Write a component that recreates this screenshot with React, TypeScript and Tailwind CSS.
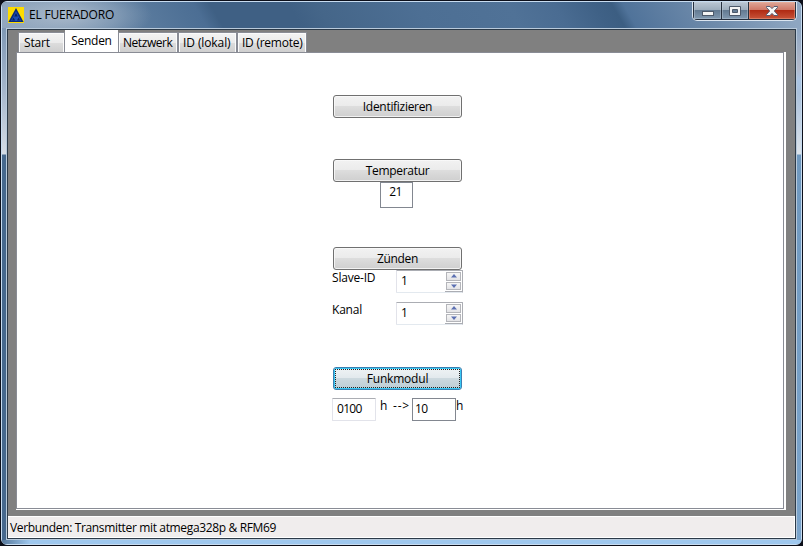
import type { ReactNode } from "react";

function AppIcon() {
  return (
    <svg width="16" height="16" viewBox="0 0 16 16" className="shrink-0">
      <rect width="16" height="16" fill="#fddc00" />
      <path d="M8 1 L15.6 15 H0.4 Z" fill="#0b2a78" />
      <path d="M8 4 L13 14 H3 Z" fill="#1c4fb4" />
      <path d="M8 6 L9.8 9.6 H6.2 Z M5.5 10.5 L7.2 13.5 H4 Z M10.5 10.5 L12.2 13.5 H9 Z" fill="#0a2260" />
    </svg>
  );
}

function CaptionButtons() {
  return (
    <div className="flex h-[19px] w-[105px] shrink-0 overflow-hidden rounded-b-[5px] border border-t-0 border-[#dbe5f0] bg-[#26303f] p-px pt-0">
      <div className="flex w-[27px] items-center justify-center bg-[linear-gradient(180deg,#bac6d3_0%,#9babbb_48%,#637a92_50%,#8199b0_100%)] shadow-[inset_0_0_0_1px_#c5d1de66]">
        <svg width="14" height="14" viewBox="0 0 14 14">
          <rect x="1.5" y="7.5" width="11" height="4" fill="#f4f4f4" stroke="#4d596a" />
        </svg>
      </div>
      <div className="ml-px flex w-[26px] items-center justify-center bg-[linear-gradient(180deg,#bac6d3_0%,#9babbb_48%,#637a92_50%,#8199b0_100%)] shadow-[inset_0_0_0_1px_#c5d1de66]">
        <svg width="14" height="14" viewBox="0 0 14 14">
          <path fillRule="evenodd" d="M1.5 2.5 H12.5 V11.5 H1.5 Z M4.5 5.5 V8.5 H9.5 V5.5 Z" fill="#f4f4f4" stroke="#4d596a" />
        </svg>
      </div>
      <div className="ml-px flex flex-1 items-center justify-center bg-[linear-gradient(180deg,#dfa799_0%,#cf7867_46%,#b02b14_50%,#c8543a_100%)] shadow-[inset_0_0_0_1px_#f0b8a066]">
        <svg width="14" height="14" viewBox="0 0 14 14">
          <path
            d="M1.5 2.5 H5 L7 4.6 L9 2.5 H12.5 V3.5 L9.3 7 L12.5 10.5 V11.5 H9 L7 9.4 L5 11.5 H1.5 V10.5 L4.7 7 L1.5 3.5 Z"
            fill="#f6f6f6"
            stroke="#565b70"
          />
        </svg>
      </div>
    </div>
  );
}

function Tab({ children, className }: { children: ReactNode; className: string }) {
  return (
    <div
      className={`h-[20px] whitespace-nowrap border border-b-0 border-[#898c95] bg-[linear-gradient(180deg,#f3f3f3_0%,#ebebeb_50%,#dddddd_52%,#cfcfcf_100%)] pt-px leading-[18px] shadow-[inset_1px_1px_0_#fbfbfb,inset_-1px_0_0_#fbfbfb] ${className}`}
    >
      {children}
    </div>
  );
}

function Button({ children, focused = false }: { children: ReactNode; focused?: boolean }) {
  if (focused) {
    return (
      <div className="ml-px h-[23px] w-[129px] rounded-[3px] border border-[#3c7fb1] bg-[linear-gradient(180deg,#eff3f5_0%,#e2e9ed_48%,#cdd9df_50%,#bccdd5_100%)] p-px tracking-[-0.2px] shadow-[inset_0_0_0_1px_#38c8f4]">
        <div className="h-[19px] border border-dotted border-[#222] text-center leading-[18px]">{children}</div>
      </div>
    );
  }
  return (
    <div className="ml-px h-[23px] w-[129px] rounded-[3px] border border-[#707070] bg-[linear-gradient(180deg,#f2f2f2_0%,#ebebeb_48%,#dddddd_50%,#cfcfcf_100%)] text-center leading-[22px] tracking-[-0.3px] shadow-[inset_0_0_0_1px_#fafafacc]">
      {children}
    </div>
  );
}

function Spinner({ value }: { value: string }) {
  return (
    <div className="flex h-[23px] w-[67px] rounded-[1px] border border-[#abadb3] border-b-[#e3e9ef] border-l-[#e2e3ea] bg-white">
      <div className="flex-1 pl-[4px] leading-[20px]">{value}</div>
      <div className="flex w-[17px] flex-col gap-px border-b border-[#abadb3] p-px">
        {["M4 0 L7 3.5 H1 Z", "M1 0.5 H7 L4 4 Z"].map((d) => (
          <div
            key={d}
            className="flex flex-1 items-center justify-center border border-[#b4b5ba] bg-[linear-gradient(180deg,#f6f6f6,#e3e3e6)]"
          >
            <svg width="8" height="4" viewBox="0 0 8 4">
              <path d={d} fill="#5c70b2" />
            </svg>
          </div>
        ))}
      </div>
    </div>
  );
}

export default function App() {
  return (
    <div className="h-[546px] w-[803px] overflow-hidden bg-[#0c0f1a] p-px font-['Open_Sans','Noto_Sans',sans-serif] text-[12px] text-black">
      <div className="flex h-full flex-col rounded-[6px] border border-[#c8dcf0] bg-[linear-gradient(90deg,#46688d_0px,#46688d_400px,#7ba4cb_800px)]">
        <header className="flex h-[26px] shrink-0 items-start justify-between rounded-t-[5px] bg-[radial-gradient(ellipse_85px_30px_at_65px_13px,#c2ccd8b0_0%,#a7b8ca70_60%,transparent_100%),linear-gradient(60deg,#8ea4bc_0px,#6584a5_90px,#4f7196_165px,#4c6e94_178px,#3f6084_192px,#3f6084_260px,#456689_285px,#4d6f94_370px,#507297_450px,#4a6c92_490px,#3f6186_525px,#3c5e82_540px,#50739a_550px,#6f8bab_620px,#8ea6c1_690px)] pl-[6px] pr-[4px]">
          <div className="flex items-center gap-[5px] pt-[5px]">
            <AppIcon />
            <span className="whitespace-nowrap leading-[16px] tracking-[-0.2px]">EL FUERADORO</span>
          </div>
          <CaptionButtons />
        </header>
        <div className="flex h-[512px] shrink-0 bg-[linear-gradient(180deg,#7f98b4_0px,#a4b5cb_60px,#d5dce5_126px,#46688d_127px,#46688d_100%)]">
          <div className="w-[4px] shrink-0" />
          <div className="flex h-[512px] w-[791px] shrink-0 flex-col border border-[#b9cadb]">
            <div className="flex h-[510px] w-[789px] flex-col border border-[#2c3a48] bg-[#808080]">
              <nav className="flex h-[22px] shrink-0 items-end pl-[10px]">
                <Tab className="w-[47px] pl-[5px] tracking-[-0.2px]">Start</Tab>
                <div className="flex h-[22px] w-[53px] justify-center bg-white leading-[22px] tracking-[-0.3px]">Senden</div>
                <Tab className="w-[60px] pl-[4px] tracking-[-0.45px]">Netzwerk</Tab>
                <Tab className="w-[59px] pl-[4px] tracking-[-0.1px]">ID (lokal)</Tab>
                <Tab className="w-[70px] pl-[4px] tracking-[-0.25px]">ID (remote)</Tab>
              </nav>
              <main className="ml-[8px] h-[458px] w-[770px] shrink-0 border-b border-r-2 border-white">
                <div className="flex h-[457px] flex-col border border-[#898c95] bg-white pl-[315px] pt-[42px]">
                  <Button>Identifizieren</Button>
                  <div className="mt-[41px]">
                    <Button>Temperatur</Button>
                    <div className="ml-[48px] h-[26px] w-[33px] border border-[#828790] pr-[2px] text-center leading-[18px] tracking-[-0.5px]">21</div>
                  </div>
                  <div className="mt-[39px]">
                    <Button>Zünden</Button>
                    <div className="flex h-[32px] w-[131px] justify-between">
                      <span className="leading-[16px] tracking-[-0.2px]">Slave-ID</span>
                      <Spinner value="1" />
                    </div>
                    <div className="flex h-[32px] w-[131px] justify-between">
                      <span className="leading-[16px] tracking-[-0.2px]">Kanal</span>
                      <Spinner value="1" />
                    </div>
                  </div>
                  <div className="mt-[33px]">
                    <Button focused>Funkmodul</Button>
                    <div className="mt-[8px] flex whitespace-nowrap">
                      <div className="h-[23px] w-[44px] rounded-[1px] border border-[#e2e3ea] border-t-[#abadb3] pl-[4px] leading-[20px] tracking-[-0.7px]">0100</div>
                      <span className="w-[13px] pl-[4px] leading-[16px]">h</span>
                      <span className="w-[23px] pl-[4px] leading-[16px] tracking-[0.8px]">--&gt;</span>
                      <div className="h-[23px] w-[44px] border border-[#828790] pl-[2px] leading-[19px] tracking-[-0.5px]">10</div>
                      <span className="leading-[16px]">h</span>
                    </div>
                  </div>
                </div>
              </main>
              <footer className="mt-[6px] flex h-[22px] shrink-0 items-center border-y border-r border-white bg-[#f0eded] pl-[2px] pt-[2px] tracking-[-0.35px]">
                Verbunden: Transmitter mit atmega328p &amp; RFM69
              </footer>
            </div>
          </div>
          <div className="flex-1 bg-[linear-gradient(180deg,#8da5c1_0px,#b3b9c9_40px,#aac5e4_52px,#a9c1dc_65px,#dce3ea_126px,#6f98be_127px,#7ba4cb_100%)]" />
        </div>
        <div className="flex-1 rounded-b-[5px] bg-[linear-gradient(90deg,#57799c_0px,#9fc8ee_28px,#9fc8ee_100%)]" />
      </div>
    </div>
  );
}
